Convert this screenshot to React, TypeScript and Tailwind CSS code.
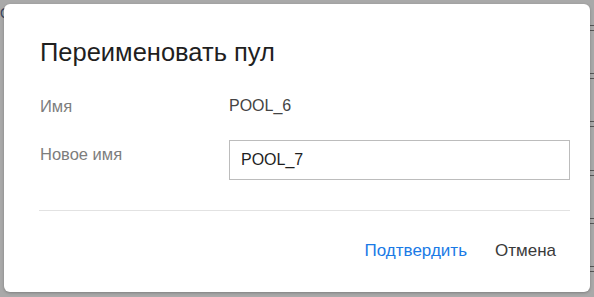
export default function App() {
  return (
    <div className="relative h-[297px] w-[594px] overflow-hidden bg-[#a9a9a9] p-[4px] font-['Liberation_Sans',Arial,sans-serif]">
      {/* faint page content behind the overlay */}
      <div className="absolute left-0 top-[6px] text-[14px] leading-none text-[#3a4660]">Q</div>
      <div className="absolute inset-y-0 right-0 flex w-[4px] flex-col justify-around py-[4px]">
        {Array.from({ length: 6 }).map((_, i) => (
          <div key={i} className="h-[6px] border-y border-[#555]" />
        ))}
      </div>

      <div className="relative flex h-[288px] flex-col rounded-[6px] bg-white pl-[36px] pr-[20px] pt-[32px] shadow-[0_1px_3px_rgba(0,0,0,0.25)]">
        <h2 className="text-[25.5px] leading-[32px] text-[#1f1f1f]">Переименовать пул</h2>

        <div className="mt-[26px] flex leading-[24px]">
          <div className="w-[189px] text-[16.5px] text-[#7d7d7d]">Имя</div>
          <div className="text-[16px] text-[#444]">POOL_6</div>
        </div>

        <div className="mt-[22px] flex">
          <div className="w-[189px] pt-[2px] text-[16.5px] leading-[24px] text-[#7d7d7d]">Новое имя</div>
          <input
            defaultValue="POOL_7"
            className="h-[40px] flex-1 border border-[#bcbcbc] px-[11px] text-[16px] text-[#1f1f1f] outline-none"
          />
        </div>

        <div className="-ml-px mt-[30px] h-px bg-[#e2e2e2]" />

        <div className="mt-[28px] flex justify-end gap-[28px] pr-[14px] text-[17px] leading-[24px]">
          <button className="text-[#1a7ae6]">Подтвердить</button>
          <button className="text-[#3a3a3a]">Отмена</button>
        </div>
      </div>
    </div>
  );
}
